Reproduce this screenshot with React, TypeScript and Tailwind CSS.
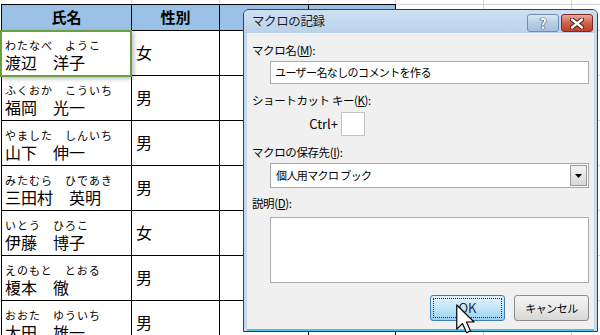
import React from "react";

const people = [
  { kana: "わたなべ　ようこ", name: "渡辺　洋子", sex: "女" },
  { kana: "ふくおか　こういち", name: "福岡　光一", sex: "男" },
  { kana: "やました　しんいち", name: "山下　伸一", sex: "男" },
  { kana: "みたむら　ひであき", name: "三田村　英明", sex: "男" },
  { kana: "いとう　ひろこ", name: "伊藤　博子", sex: "女" },
  { kana: "えのもと　とおる", name: "榎本　徹", sex: "男" },
  { kana: "おおた　ゆういち", name: "太田　雄一", sex: "男" },
];

const jp = "font-['Noto_Sans_CJK_JP','Noto_Sans',sans-serif]";

function GrayCells({ h }: { h: string }) {
  return (
    <>
      <div className={`w-[88px] shrink-0 border-r border-b border-[#d4d4d4] ${h}`} />
      <div className={`w-[88px] shrink-0 border-r border-b border-[#d4d4d4] ${h}`} />
      <div className={`w-[88px] shrink-0 border-r border-b border-[#d4d4d4] ${h}`} />
    </>
  );
}

function Sheet() {
  return (
    <div className={`flex flex-col pl-px text-black ${jp}`}>
      {/* strip above the header */}
      <div className="flex h-[4px]">
        <div className="w-[131px] shrink-0 border-r border-[#d4d4d4]" />
        <div className="w-[88px] shrink-0 border-r border-[#d4d4d4]" />
        <div className="w-[89px] shrink-0 border-r border-[#d4d4d4]" />
        <div className="w-[87px] shrink-0 border-r border-[#d4d4d4]" />
        <div className="w-[88px] shrink-0 border-r border-[#d4d4d4]" />
        <div className="w-[88px] shrink-0 border-r border-[#d4d4d4]" />
      </div>

      {/* header */}
      <div className="flex h-[27px]">
        <div className="w-[131px] shrink-0 flex items-center justify-center border border-black bg-[#9bc2e6] text-[15px] font-bold">
          氏名
        </div>
        <div className="w-[88px] shrink-0 flex items-center justify-center border-y border-r border-black bg-[#9bc2e6] text-[15px] font-bold">
          性別
        </div>
        <div className="w-[89px] shrink-0 border-y border-r border-black bg-[#9bc2e6]" />
        <div className="w-[87px] shrink-0 border-y border-r border-black bg-[#9bc2e6]" />
        <div className="w-[88px] shrink-0 border-y border-r border-[#d4d4d4]" />
        <div className="w-[88px] shrink-0 border-y border-r border-[#d4d4d4]" />
        <div className="w-[88px] shrink-0 border-y border-r border-[#d4d4d4]" />
      </div>

      {people.map((p) => (
        <div key={p.name} className="flex h-[45px]">
          <div className="w-[131px] shrink-0 border-x border-b border-black pl-[3px] pt-[8px]">
            <div className="text-[11px] leading-[12px] tracking-[1px]">{p.kana}</div>
            <div className="mt-[2px] text-[16px] leading-[18px]">{p.name}</div>
          </div>
          <div className="w-[88px] shrink-0 border-r border-b border-black pl-[4px] pt-[12px] text-[16px] leading-[18px]">
            {p.sex}
          </div>
          <div className="w-[89px] shrink-0 border-r border-b border-black" />
          <div className="w-[87px] shrink-0 border-r border-b border-black" />
          <GrayCells h="h-[45px]" />
        </div>
      ))}
    </div>
  );
}

function Mnemonic({ pre, key1, post }: { pre: string; key1: string; post: string }) {
  return (
    <div className="h-[16px] pl-[5px] text-[11.5px] leading-[16px] tracking-[-0.4px]">
      {pre}(<span className="underline">{key1}</span>){post}
    </div>
  );
}

function Dialog() {
  return (
    <div
      className={`absolute left-[243px] top-[9px] flex h-[323px] w-[355px] flex-col rounded-t-[6px] border border-[#3a3f45] bg-[#c4d9ee] text-black ${jp}`}
    >
      {/* title bar */}
      <div className="flex h-[23px] shrink-0 items-start justify-between rounded-t-[5px] bg-gradient-to-b from-[#cfe0f2] to-[#bad2ea] pl-[8px] pr-[4px]">
        <div className="mt-[3px] text-[12.5px] leading-[16px] tracking-[-0.4px] text-[#1e1e1e]">マクロの記録</div>
        <div className="mt-[4px] flex gap-[2px]">
          <div className="flex h-[18px] w-[32px] items-center justify-center rounded-[3px] border border-[#6f8eaf] bg-gradient-to-b from-[#dbe8f5] via-[#b7cde5] to-[#a5c0de] text-[14px] font-bold leading-none text-white [text-shadow:0_0_1px_#2d3f55,0_0_1px_#2d3f55,0_0_1px_#2d3f55]">
            ?
          </div>
          <div className="flex h-[18px] w-[32px] items-center justify-center rounded-[3px] border border-[#7d2a20] bg-gradient-to-b from-[#e8a89c] via-[#d0604c] to-[#c0402c]">
            <svg width="14" height="11" viewBox="0 0 14 11">
              <path
                d="M2 1.5 L12 9.5 M12 1.5 L2 9.5"
                stroke="#3b1410"
                strokeWidth="4.2"
                strokeLinecap="round"
              />
              <path
                d="M2 1.5 L12 9.5 M12 1.5 L2 9.5"
                stroke="#ffffff"
                strokeWidth="2.4"
                strokeLinecap="round"
              />
            </svg>
          </div>
        </div>
      </div>

      {/* client area */}
      <div className="mx-[3px] flex h-[298px] flex-col border-b-2 border-[#4fc3e3] bg-[#f0f0f0] pt-[9px]">
        <Mnemonic pre="マクロ名" key1="M" post=":" />
        <div className="ml-[23px] mt-[3px] flex h-[23px] w-[319px] items-center border border-[#abadb3] bg-white pl-[4px] text-[11px] tracking-[-0.6px]">
          ユーザー名なしのコメントを作る
        </div>

        <div className="mt-[8px]">
          <Mnemonic pre="ショートカット キー" key1="K" post=":" />
        </div>
        <div className="mt-[4px] flex h-[24px] items-center">
          <div className="w-[94px] pr-[3px] text-right text-[13px]">Ctrl+</div>
          <div className="h-[24px] w-[24px] border border-[#c2c2c2] bg-white" />
        </div>

        <div className="mt-[8px]">
          <Mnemonic pre="マクロの保存先" key1="I" post=":" />
        </div>
        <div className="ml-[23px] mt-[3px] flex h-[25px] w-[319px] border border-[#a8a8a8] bg-white p-px">
          <div className="flex flex-1 items-center pl-[4px] text-[11px] tracking-[-0.6px]">個人用マクロ ブック</div>
          <div className="flex w-[17px] items-center justify-center border border-[#9a9a9a] bg-gradient-to-b from-[#f4f4f4] to-[#d8d8d8]">
            <svg width="7" height="4" viewBox="0 0 7 4">
              <path d="M0 0 H7 L3.5 4 Z" fill="#000" />
            </svg>
          </div>
        </div>

        <div className="mt-[7px]">
          <Mnemonic pre="説明" key1="D" post=":" />
        </div>
        <div className="ml-[23px] mt-[6px] h-[66px] w-[319px] border border-[#abadb3] bg-white" />

        <div className="mt-[12px] flex justify-end gap-[9px] pr-[5px]">
          <div className="flex h-[26px] w-[75px] rounded-[3px] border border-[#3c7fb1] bg-gradient-to-b from-[#e5f4fc] via-[#c4e5f6] to-[#98d1ef] p-[2px]">
            <div className="flex flex-1 items-center justify-center border border-dotted border-[#2a2a2a] text-[13px] text-[#1a2a40]">
              OK
            </div>
          </div>
          <div className="flex h-[26px] w-[75px] items-center justify-center rounded-[3px] border border-[#8c8c8c] bg-gradient-to-b from-[#f3f3f3] via-[#e9e9e9] to-[#d6d6d6] text-[11px] tracking-[-0.5px]">
            キャンセル
          </div>
        </div>
      </div>
    </div>
  );
}

function Cursor() {
  return (
    <svg
      className="absolute left-[456px] top-[304px]"
      width="19"
      height="30"
      viewBox="0 0 12.6 19.6"
    >
      <path
        d="M0.5 0.5 L0.5 16.5 L4.3 12.8 L7 18.9 L9.6 17.8 L7 11.8 L12 11.8 Z"
        fill="#fff"
        stroke="#000"
        strokeWidth="0.8"
        strokeLinejoin="round"
      />
    </svg>
  );
}

export default function App() {
  return (
    <div className="relative h-[335px] w-[600px] overflow-hidden bg-white">
      <Sheet />
      {/* selected cell */}
      <div className="absolute left-0 top-[30px] h-[47px] w-[132px] border-2 border-[#6a9f43] shadow-[2px_2px_4px_rgba(0,0,0,0.25)]" />
      <Dialog />
      <Cursor />
    </div>
  );
}
